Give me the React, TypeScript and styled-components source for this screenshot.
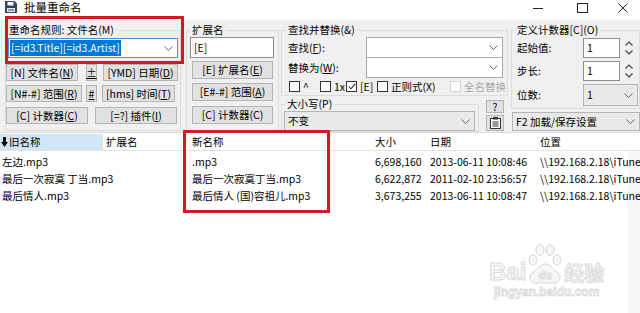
import React from 'react';
import styled, { createGlobalStyle } from 'styled-components';

const GlobalStyle = createGlobalStyle`
  html, body { margin: 0; padding: 0; background: #fff; }
  body {
    font-family: "Noto Sans CJK SC", "Noto Sans", sans-serif;
    font-size: 10.5px;
    line-height: 14px;
    color: #000;
  }
  * { box-sizing: border-box; }
`;

const Window = styled.div`
  position: relative;
  width: 640px;
  height: 313px;
  overflow: hidden;
  background: #fff;
`;

const TitleBar = styled.div`
  display: flex;
  height: 20px;
  background: #fff;
`;

const TitleIcon = styled.svg`
  flex: none;
  margin: 1px 0 0 5px;
`;

const TitleText = styled.div`
  margin-left: 7px;
  font-size: 11.5px;
  line-height: 15px;
`;

const WinControls = styled.div`
  display: flex;
  margin-left: auto;
`;

const WinButton = styled.div<{ $w: number }>`
  display: flex;
  align-items: center;
  justify-content: center;
  width: ${p => p.$w}px;
  height: 16px;
`;

const Panel = styled.div`
  display: flex;
  align-items: flex-start;
  height: 113px;
  padding: 3px 0 0 5px;
  background: #f0f0f0;
  border-bottom: 1px solid #dcdcdc;
`;

const Column = styled.div<{ $w: number; $ml?: number }>`
  display: flex;
  flex-direction: column;
  flex: none;
  width: ${p => p.$w}px;
  margin-left: ${p => p.$ml ?? 0}px;
`;

const Group = styled.fieldset<{ $px: number; $pb?: number; $h?: number }>`
  margin: 0;
  min-width: 0;
  padding: 0 ${p => p.$px}px ${p => p.$pb ?? 2}px;
  border: 1px solid #dcdcdc;
  ${p => (p.$h ? `height: ${p.$h}px;` : '')}
`;

const Legend = styled.legend<{ $ml?: number }>`
  padding: 0 2px;
  margin-left: ${p => p.$ml ?? 0}px;
  font-size: 10.5px;
  line-height: 14px;
`;

const Field = styled.div<{ $w: number; $h: number; $bg?: string; $border?: string; $mt?: number; $ml?: number }>`
  display: flex;
  align-items: center;
  flex: none;
  width: ${p => p.$w}px;
  height: ${p => p.$h}px;
  margin-top: ${p => p.$mt ?? 0}px;
  margin-left: ${p => p.$ml ?? 0}px;
  padding: 0 4px 0 3px;
  background: ${p => p.$bg ?? '#fff'};
  border: 1px solid ${p => p.$border ?? '#a8a8a8'};
  white-space: nowrap;
`;

const Selected = styled.span`
  margin-left: -2px;
  padding: 1px 1px;
  background: #0078d7;
  color: #fff;
`;

const ChevronIcon = styled.svg`
  margin-left: auto;
  flex: none;
`;

const Chevron = () => (
  <ChevronIcon width="9" height="5" viewBox="0 0 9 5">
    <polyline points="0.5,0.5 4.5,4.5 8.5,0.5" fill="none" stroke="#666" strokeWidth="1" />
  </ChevronIcon>
);

const BtnRow = styled.div<{ $mt: number; $h: number }>`
  display: flex;
  height: ${p => p.$h}px;
  margin-top: ${p => p.$mt}px;
`;

const Btn = styled.div<{ $w: number; $ml?: number; $h?: number; $mt?: number }>`
  display: flex;
  align-items: center;
  justify-content: center;
  flex: none;
  width: ${p => p.$w}px;
  height: ${p => (p.$h ? `${p.$h}px` : '100%')};
  margin-left: ${p => p.$ml ?? 0}px;
  margin-top: ${p => p.$mt ?? 0}px;
  background: #e1e1e1;
  border: 1px solid #b4b4b4;
  white-space: nowrap;
`;

const FormRow = styled.div<{ $mt?: number }>`
  display: flex;
  align-items: center;
  margin-top: ${p => p.$mt ?? 0}px;
`;

const FormLabel = styled.div<{ $w: number }>`
  flex: none;
  width: ${p => p.$w}px;
  padding-left: 2px;
  white-space: nowrap;
`;

const CheckRow = styled.div`
  display: flex;
  align-items: center;
  height: 13px;
  margin: 2px 0 0 3px;
`;

const CheckItem = styled.div<{ $w: number; $disabled?: boolean }>`
  display: flex;
  align-items: center;
  gap: 3px;
  flex: none;
  width: ${p => p.$w}px;
  color: ${p => (p.$disabled ? '#a8a8a8' : '#000')};
  white-space: nowrap;
`;

const Box = styled.span<{ $disabled?: boolean }>`
  display: flex;
  align-items: center;
  justify-content: center;
  flex: none;
  width: 11px;
  height: 11px;
  background: #fff;
  border: 1px solid ${p => (p.$disabled ? '#d4d4d4' : '#333')};
`;

const BottomRow = styled.div`
  display: flex;
  align-items: flex-start;
  margin-top: 1px;
`;

const SideButtons = styled.div`
  display: flex;
  flex-direction: column;
  margin-left: 7px;
`;

const Spinner = styled.svg`
  flex: none;
  margin-left: 4px;
`;

const List = styled.div`
  height: 180px;
  background: linear-gradient(to right, #fff 628px, #f6f6f6 628px);
`;

const HeaderRow = styled.div`
  display: flex;
  height: 17px;
  margin-top: 1px;
  background: #fff;
  border-bottom: 1px solid #e3e3e3;
`;

const HeaderCell = styled.div<{ $w: number; $active?: boolean; $pl?: number }>`
  display: flex;
  align-items: center;
  gap: 1px;
  flex: none;
  width: ${p => p.$w}px;
  padding-left: ${p => p.$pl ?? 3}px;
  background: ${p => (p.$active ? '#cfe6f8' : 'transparent')};
  white-space: nowrap;
`;

const Rows = styled.div`
  padding-top: 2px;
`;

const Row = styled.div`
  display: flex;
  height: 17px;
  align-items: center;
`;

const Cell = styled.div<{ $w: number; $right?: boolean; $pl?: number; $pr?: number }>`
  flex: none;
  width: ${p => p.$w}px;
  padding-left: ${p => p.$pl ?? 3}px;
  padding-right: ${p => p.$pr ?? 0}px;
  text-align: ${p => (p.$right ? 'right' : 'left')};
  white-space: nowrap;
`;

const RedBox = styled.div<{ $x: number; $y: number; $w: number; $h: number }>`
  position: absolute;
  left: ${p => p.$x}px;
  top: ${p => p.$y}px;
  width: ${p => p.$w}px;
  height: ${p => p.$h}px;
  border: 3px solid #cf1c22;
  pointer-events: none;
`;

const Watermark = styled.div`
  position: absolute;
  left: 489px;
  top: 243px;
  display: flex;
  flex-direction: column;
  align-items: center;
  pointer-events: none;
`;

const MarkTop = styled.div`
  display: flex;
  align-items: flex-end;
`;

const MarkText = styled.span<{ $size: number }>`
  font-family: "Liberation Sans", "Noto Sans CJK SC", sans-serif;
  font-weight: bold;
  font-size: ${p => p.$size}px;
  line-height: ${p => p.$size + 2}px;
  color: #f6f6f6;
  -webkit-text-stroke: 1px #dcdcdc;
`;

const MarkUrl = styled.span`
  font-family: "Liberation Sans", sans-serif;
  font-weight: bold;
  font-size: 12px;
  line-height: 14px;
  color: #f4f4f4;
  -webkit-text-stroke: 0.8px #dadada;
`;

const counterSpin = (
  <Spinner width="10" height="16" viewBox="0 0 10 16">
    <polyline points="1.5,5.5 5,2 8.5,5.5" fill="none" stroke="#444" strokeWidth="1.2" />
    <polyline points="1.5,10.5 5,14 8.5,10.5" fill="none" stroke="#444" strokeWidth="1.2" />
  </Spinner>
);

const col1Rows = [
  {
    mt: 6, h: 17,
    items: [
      { w: 72, ml: 0, label: <>[N] 文件名(<u>N</u>)</> },
      { w: 11, ml: 8, label: <u>±</u> },
      { w: 75, ml: 6, label: <>[YMD] 日期(<u>D</u>)</> },
    ],
  },
  {
    mt: 4, h: 17,
    items: [
      { w: 76, ml: 0, label: <>[N#-#] 范围(<u>R</u>)</> },
      { w: 11, ml: 4, label: <u>#</u> },
      { w: 73, ml: 5, label: <>[hms] 时间(<u>T</u>)</> },
    ],
  },
  {
    mt: 5, h: 17,
    items: [
      { w: 82, ml: 0, label: <>[C] 计数器(<u>C</u>)</> },
      { w: 82, ml: 7, label: <>[=?] 插件(<u>I</u>)</> },
    ],
  },
];

const col2Buttons = [
  { mt: 3, label: <>[E] 扩展名(<u>E</u>)</> },
  { mt: 4, label: <>[E#-#] 范围(<u>A</u>)</> },
  { mt: 5, label: <>[C] 计数器(C)</> },
];

const checks = [
  { w: 31, label: '^', checked: false },
  { w: 26, label: '1x', checked: false },
  { w: 31, label: '[E]', checked: true },
  { w: 73, label: '正则式(X)', checked: false },
  { w: 60, label: '全名替换', checked: false, disabled: true },
];

const columns = [
  { w: 103 },
  { w: 86 },
  { w: 183 },
  { w: 55 },
  { w: 110 },
  { w: 103 },
];

const files = [
  { old: '左边.mp3', next: '.mp3', size: '6,698,160', date: '2013-06-11 10:08:46' },
  { old: '最后一次寂寞 丁当.mp3', next: '最后一次寂寞丁当.mp3', size: '6,622,872', date: '2011-02-10 23:56:57' },
  { old: '最后情人.mp3', next: '最后情人 (国)容祖儿.mp3', size: '3,673,255', date: '2013-06-11 10:08:47' },
];

const location = '\\\\192.168.2.18\\iTunes';

const App = () => (
  <Window>
    <GlobalStyle />
    <TitleBar>
      <TitleIcon width="12" height="12" viewBox="0 0 12 12">
        <path d="M0 0h9.5l2.5 2.5V12H0z" fill="#34435e" />
        <rect x="2.5" y="1" width="6" height="3.5" fill="#fff" />
        <rect x="2" y="7" width="8" height="4" fill="#e6ebf1" />
        <rect x="3" y="8.5" width="6" height="1" fill="#34435e" />
      </TitleIcon>
      <TitleText>批量重命名</TitleText>
      <WinControls>
        <WinButton $w={45}>
          <svg width="10" height="1" viewBox="0 0 10 1"><rect width="10" height="1" fill="#222" /></svg>
        </WinButton>
        <WinButton $w={45}>
          <svg width="11" height="10" viewBox="0 0 11 10"><rect x="0.5" y="0.5" width="10" height="9" fill="none" stroke="#222" /></svg>
        </WinButton>
        <WinButton $w={35}>
          <svg width="10" height="10" viewBox="0 0 10 10"><path d="M0.5 0.5l9 9M9.5 0.5l-9 9" stroke="#222" strokeWidth="1" /></svg>
        </WinButton>
      </WinControls>
    </TitleBar>

    <Panel>
      <Column $w={176}>
        <Group $px={0} $h={108}>
          <Legend $ml={1}>重命名规则: 文件名(M)</Legend>
          <Field $w={170} $h={20} $mt={1} $ml={2} $border="#4a94d8">
            <Selected>[=id3.Title][=id3.Artist]</Selected>
            <Chevron />
          </Field>
          {col1Rows.map((row, i) => (
            <BtnRow key={i} $mt={row.mt} $h={row.h}>
              {row.items.map((b, j) => (
                <Btn key={j} $w={b.w} $ml={b.ml}>{b.label}</Btn>
              ))}
            </BtnRow>
          ))}
        </Group>
      </Column>

      <Column $w={93} $ml={5}>
        <Group $px={3} $h={108}>
          <Legend>扩展名</Legend>
          <Field $w={84} $h={21} $border="#8f8f8f">[E]</Field>
          {col2Buttons.map((b, i) => (
            <Btn key={i} $w={81} $h={18} $ml={2} $mt={b.mt}>{b.label}</Btn>
          ))}
        </Group>
      </Column>

      <Column $w={227} $ml={2}>
        <Group $px={4}>
          <Legend>查找并替换(&amp;)</Legend>
          <FormRow>
            <FormLabel $w={80}>查找(<u>F</u>):</FormLabel>
            <Field $w={137} $h={21}><Chevron /></Field>
          </FormRow>
          <FormRow $mt={-1}>
            <FormLabel $w={80}>替换为(<u>W</u>):</FormLabel>
            <Field $w={137} $h={21}><Chevron /></Field>
          </FormRow>
          <CheckRow>
            {checks.map((c, i) => (
              <CheckItem key={i} $w={c.w} $disabled={c.disabled}>
                <Box $disabled={c.disabled}>
                  {c.checked && (
                    <svg width="8" height="7" viewBox="0 0 9 8">
                      <polyline points="0.8,4 3.3,6.6 8.3,0.8" fill="none" stroke="#222" strokeWidth="1.2" />
                    </svg>
                  )}
                </Box>
                {c.label}
              </CheckItem>
            ))}
          </CheckRow>
        </Group>
        <BottomRow>
          <Group $px={3} $pb={0}>
            <Legend>大小写(P)</Legend>
            <Field $w={191} $h={20} $ml={-1} $bg="#e9e9e9" $border="#b4b4b4">
              不变
              <Chevron />
            </Field>
          </Group>
          <SideButtons>
            <Btn $w={18} $h={13} $mt={3}>?</Btn>
            <Btn $w={18} $h={16} $mt={2}>
              <svg width="11" height="12" viewBox="0 0 11 12">
                <rect x="0.5" y="1.5" width="10" height="10" fill="#fff" stroke="#333" />
                <rect x="3" y="0" width="5" height="2.5" fill="#333" />
                <path d="M2.5 5h6M2.5 7h6M2.5 9h6" stroke="#333" strokeWidth="1" />
              </svg>
            </Btn>
          </SideButtons>
        </BottomRow>
      </Column>

      <Column $w={129} $ml={3}>
        <Group $px={3}>
          <Legend>定义计数器[C](O)</Legend>
          <FormRow $mt={1}>
            <FormLabel $w={68}>起始值:</FormLabel>
            <Field $w={37} $h={20} $border="#8f8f8f">1</Field>
            {counterSpin}
          </FormRow>
          <FormRow $mt={3}>
            <FormLabel $w={68}>步长:</FormLabel>
            <Field $w={37} $h={20} $border="#8f8f8f">1</Field>
            {counterSpin}
          </FormRow>
          <FormRow $mt={3}>
            <FormLabel $w={68}>位数:</FormLabel>
            <Field $w={55} $h={22} $bg="#e9e9e9" $border="#b4b4b4">
              1
              <Chevron />
            </Field>
          </FormRow>
        </Group>
        <Field $w={128} $h={19} $mt={3} $ml={1} $bg="#e9e9e9" $border="#b4b4b4">
          F2 加载/保存设置
          <Chevron />
        </Field>
      </Column>
    </Panel>

    <List>
      <HeaderRow>
        <HeaderCell $w={columns[0].w} $pl={1} $active>
          <svg width="7" height="10" viewBox="0 0 7 10">
            <path d="M2 0h3v5h2L3.5 10 0 5h2z" fill="#111" />
          </svg>
          旧名称
        </HeaderCell>
        <HeaderCell $w={columns[1].w}>扩展名</HeaderCell>
        <HeaderCell $w={columns[2].w}>新名称</HeaderCell>
        <HeaderCell $w={columns[3].w}>大小</HeaderCell>
        <HeaderCell $w={columns[4].w}>日期</HeaderCell>
        <HeaderCell $w={columns[5].w}>位置</HeaderCell>
      </HeaderRow>
      <Rows>
        {files.map((f, i) => (
          <Row key={i}>
            <Cell $w={columns[0].w} $pl={2}>{f.old}</Cell>
            <Cell $w={columns[1].w} />
            <Cell $w={columns[2].w}>{f.next}</Cell>
            <Cell $w={columns[3].w} $right $pr={11}>{f.size}</Cell>
            <Cell $w={columns[4].w}>{f.date}</Cell>
            <Cell $w={columns[5].w}>{location}</Cell>
          </Row>
        ))}
      </Rows>
    </List>

    <RedBox $x={5} $y={16} $w={179} $h={48} />
    <RedBox $x={183} $y={130} $w={147} $h={83} />

    <Watermark>
      <MarkTop>
        <MarkText $size={24}>Bai</MarkText>
        <svg width="38" height="42" viewBox="0 0 38 42">
          <g fill="#f6f6f6" stroke="#d8d8d8" strokeWidth="1">
            <ellipse cx="7" cy="17" rx="4" ry="5" />
            <ellipse cx="14" cy="7" rx="4" ry="5.5" />
            <ellipse cx="24" cy="7" rx="4" ry="5.5" />
            <ellipse cx="31" cy="17" rx="4" ry="5" />
            <path d="M19 21c6 0 8 6 13 9 4 3 2 10-4 10H10c-6 0-8-7-4-10 5-3 7-9 13-9z" />
          </g>
          <text x="19" y="36" textAnchor="middle" fontFamily="Liberation Sans, sans-serif" fontWeight="bold" fontSize="11" fill="#f6f6f6" stroke="#d4d4d4" strokeWidth="0.7">du</text>
        </svg>
        <MarkText $size={20}>经验</MarkText>
      </MarkTop>
      <MarkUrl>jingyan.baidu.com</MarkUrl>
    </Watermark>
  </Window>
);

export default App;
